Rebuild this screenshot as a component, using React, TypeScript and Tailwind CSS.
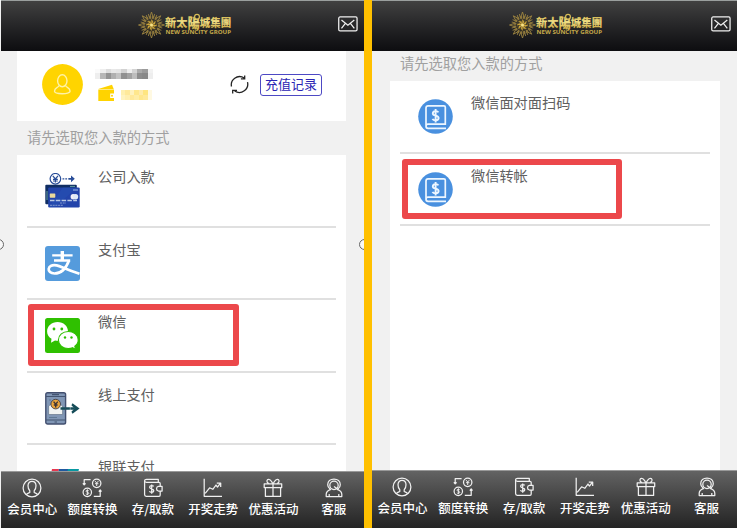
import React from "react";

const LogoMark = () => (
  <svg width="96" height="30" viewBox="0 0 96 30" className="block">
    <defs>
      <linearGradient id="gold" x1="0" y1="0" x2="0" y2="1">
        <stop offset="0" stopColor="#c8a63c" />
        <stop offset="0.5" stopColor="#f0df86" />
        <stop offset="1" stopColor="#c39b30" />
      </linearGradient>
    </defs>
    <g transform="translate(14.5 15)" stroke="#9d8440" fill="none">
      {Array.from({ length: 16 }, (_, i) => (
        <path key={i} d={i % 2 ? "M-1 -7.5L-1.2 -11.2M1 -7.5L1.2 -11.2" : "M-1.6 -8L0 -13L1.6 -8"} strokeWidth="0.9" transform={`rotate(${i * 22.5})`} />
      ))}
      <circle r="7.6" strokeWidth="2.6" stroke="#8e783c" strokeDasharray="2.2 0.8" />
      <circle r="5.2" strokeWidth="0.8" stroke="#5c4e25" />
      {Array.from({ length: 8 }, (_, i) => (
        <path key={i} d="M0 0L1.7 -3.2L0 -5.4Z" fill="#cda63a" stroke="#cda63a" strokeWidth="0.4" transform={`rotate(${i * 45})`} />
      ))}
      <circle r="1.5" fill="#f5e28a" stroke="none" />
    </g>
    <g fill="url(#gold)" fontFamily="'Noto Sans CJK TC', sans-serif" fontWeight="900">
      <text x="28" y="16.9" fontSize="11.3" textLength="22.4" lengthAdjust="spacingAndGlyphs">新太</text>
      <text x="50.4" y="17.8" fontSize="13.5" textLength="12.4" lengthAdjust="spacingAndGlyphs">陽</text>
      <text x="62.8" y="16.9" fontSize="11.3" textLength="31.4" lengthAdjust="spacingAndGlyphs">城集團</text>
    </g>
    <circle cx="60" cy="6.8" r="2.4" fill="#292929" stroke="#d8bd59" strokeWidth="1.2" />
    <text x="28.5" y="24.2" fontSize="5.4" fontWeight="700" fill="#c6aa4a" fontFamily="'Open Sans', sans-serif" textLength="65.5" lengthAdjust="spacingAndGlyphs">NEW SUNCITY GROUP</text>
  </svg>
);

const Header = () => (
  <header className="flex h-[51px] shrink-0 items-start border-t border-[#9a9f9e] bg-gradient-to-b from-[#414141] to-[#0d0d10]">
    <div className="ml-[136px] mt-[9px]"><LogoMark /></div>
    <svg className="ml-auto mr-[6px] mt-[15px]" width="20" height="16" viewBox="0 0 19 15" fill="none" stroke="#f0f0f0" strokeWidth="1.2">
      <rect x="0.7" y="0.8" width="17.4" height="13.2" rx="1.3" />
      <path d="M3.3 3.7L9.4 8.6L15.5 3.7M3.3 11.6L7 7M15.5 11.6L11.8 7" />
    </svg>
  </header>
);

const MemberIcon = () => (
  <>
    <circle cx="10" cy="10" r="8.9" />
    <path d="M4.3 16.6C5 15.4 6.5 15.1 7.8 14.5V12.7C6.6 11.5 6 9.8 6 7.8C6 5 7.6 3.3 10 3.3S14 5 14 7.8C14 9.8 13.4 11.5 12.2 12.7V14.5C13.5 15.1 15 15.4 15.7 16.6" />
  </>
);
const ExchangeIcon = () => (
  <>
    <circle cx="14.7" cy="5.3" r="4.2" />
    <circle cx="5.3" cy="14.3" r="4.2" />
    <path d="M13.1 3.1L14.7 5L16.3 3.1M14.7 5V8M13 5.7H16.4M6.7 12.8C6 11.9 4 12.1 4 13.2C4 14.5 6.8 14 6.8 15.3C6.8 16.5 4.7 16.7 3.8 15.8M5.4 11.4V17.2" strokeWidth="0.95" />
    <path d="M8.6 1.5H2.2V6.7M.8 5.4L2.2 6.9L3.6 5.4M11.8 18.3H18.2V12.2M16.8 13.6L18.2 12L19.5 13.6" />
  </>
);
const WalletIcon = () => (
  <>
    <path d="M17.2 8V5.5C17.2 4.7 16.8 4.3 16 4.3H3.5C2.4 4.3 1.6 3.7 1.6 2.8S2.4 1.4 3.5 1.4H15.3V4.2M1.6 2.8V16.6C1.6 17.8 2.2 18.3 3.2 18.3H16C16.8 18.3 17.2 17.8 17.2 17V13.3M19.1 8.4H15.4A2.35 2.35 0 0 0 15.4 13H19.1Z" />
    <path d="M10.7 8.4C9.7 7.1 6.6 7.4 6.6 9.2C6.6 11.2 10.8 10.6 10.8 12.8C10.8 14.6 7.5 14.8 6.3 13.4M8.7 6.4V15.8" />
  </>
);
const TrendIcon = () => (
  <path d="M1.2 .8V18.3H19M2.2 15.3L6.6 9.8L9.8 11.3L13 7L14.5 9L17.5 5.2M13.8 5.1H17.7V8.9" />
);
const GiftIcon = () => (
  <path d="M1.2 5.8H18.7V9.6H1.2ZM2.4 9.6V18.4H17.6V9.6M10 5.8V18.4M9.9 5.7C8 1.4 5.6 .6 4.4 1.8C3.3 3 4.3 5 6 5.7M10.1 5.7C12 1.4 14.4 .6 15.6 1.8C16.7 3 15.7 5 14 5.7" />
);
const ServiceIcon = () => (
  <path d="M6 10.9C4.5 9.8 3.7 8.6 3.7 6.8C3.7 3.2 6.4 1 10 1S16.3 3.2 16.3 6.8C16.3 8.6 15.5 9.8 14 10.9M10 3.1A4.2 4.2 0 1 0 10 11.5A4.2 4.2 0 1 0 10 3.1M10 8.4L13.6 11M7 11.4C3.6 12.4 2.2 14.1 2.2 16.3V18.5H17.8V16.3C17.8 14.1 16.4 12.4 13 11.4M5.2 18.3V16M14.8 18.3V16" />
);

const tabs = [
  { label: "会员中心", icon: <MemberIcon /> },
  { label: "额度转换", icon: <ExchangeIcon /> },
  { label: "存/取款", icon: <WalletIcon /> },
  { label: "开奖走势", icon: <TrendIcon /> },
  { label: "优惠活动", icon: <GiftIcon /> },
  { label: "客服", icon: <ServiceIcon /> },
];

const TabBar = ({ className }: { className: string }) => (
  <nav className={`grid shrink-0 grid-cols-6 border-t border-[#999] bg-gradient-to-b from-[#636363] to-[#242424] text-white ${className}`}>
    {tabs.map((t) => (
      <div key={t.label} className="flex flex-col items-center pt-[6px]">
        <svg width="20" height="20" viewBox="0 0 20 20" fill="none" stroke="#f0f0f0" strokeWidth="1.25" strokeLinejoin="round">{t.icon}</svg>
        <span className="mt-[2px] whitespace-nowrap text-[12.5px] font-medium leading-[18px]">{t.label}</span>
      </div>
    ))}
  </nav>
);

const BankCards = () => (
  <svg width="35" height="35" viewBox="0 0 35 35">
    <g fill="none" stroke="#294d98" strokeWidth="1.2">
      <circle cx="10.4" cy="5.8" r="5.3" />
      <path d="M7.8 2.9L10.4 6L13 2.9M10.4 6V9.5M8 6.4H12.8M8 8H12.8" />
      <path d="M17.5 5.8H24" strokeDasharray="1.8 1" />
    </g>
    <path d="M24 4.9H26V2.4L29.8 5.8L26 9.2V6.7H24Z" fill="#294d98" />
    <rect x="0.3" y="11.8" width="31.5" height="19.4" rx="1" fill="#102e63" />
    <path d="M25 13.4H30M2 18V27" stroke="#66a0a3" />
    <rect x="3.2" y="14.4" width="31.5" height="20" rx="1.2" fill="#2344aa" />
    <path d="M4 34L18 14.5H32L10 34Z" fill="#2959bb" opacity=".35" />
    <rect x="4.8" y="20.5" width="5.5" height="4.2" rx=".6" fill="#ead99b" />
    <path d="M28 17H33" stroke="#8ca9dd" strokeWidth="1.2" />
    <ellipse cx="28.2" cy="23.8" rx="2.6" ry="2.7" fill="#f2f0f7" />
    <ellipse cx="30.6" cy="23.8" rx="2.6" ry="2.7" fill="#e1ebf7" />
    <path d="M5 27.5H32" stroke="#b9c8e4" strokeWidth="1.5" strokeDasharray="4.5 1.3" />
    <path d="M15 30H21M5 32.3H18" stroke="#8098cd" strokeDasharray="2 .7" />
  </svg>
);
const Alipay = () => (
  <svg width="35" height="35" viewBox="0 0 35 35">
    <rect width="35" height="35" rx="3" fill="#559bdc" />
    <g fill="none" stroke="white">
      <path d="M7.2 9.3H27.6M9 14.5H25.2" strokeWidth="2.3" />
      <path d="M17.3 5V14.5" strokeWidth="3.4" />
      <path d="M24 14.5C21.5 21.2 16.8 27.5 9.5 27.5C5.5 27.5 3.4 25.2 3.7 22.8C4.1 20 7.2 18.4 11.6 19.4C16 20.4 20.8 23.5 34.5 27.8" strokeWidth="2.7" />
    </g>
  </svg>
);
const WeChat = () => (
  <svg width="35" height="35" viewBox="0 0 35 35">
    <rect width="35" height="35" rx="2.5" fill="#2fc000" />
    <path d="M12.6 4.1C6.8 4.1 2.1 8.3 2.1 13.4C2.1 16.5 3.8 19 6.5 20.8L6 24.8L10 22.4C18 24 23 19 23 13.4C23 8.3 18.4 4.1 12.6 4.1Z" fill="white" />
    <path d="M23.3 13.5C17.8 13.5 13.4 17.2 13.4 22S17.8 30.5 23.3 30.5C24.9 30.5 26.3 30.2 27.5 29.7L30.6 31.5L29.8 28.3C32 26.7 33.2 24.6 33.2 22C33.2 17.2 28.8 13.5 23.3 13.5Z" fill="white" stroke="#2fc000" strokeWidth="1.1" />
    <g fill="#2fc000"><circle cx="9" cy="11" r="1.4" /><circle cx="16.8" cy="11" r="1.4" /><circle cx="20" cy="19.5" r="1.2" /><circle cx="26.5" cy="19.5" r="1.2" /></g>
  </svg>
);
const PhonePay = () => (
  <svg width="35" height="35" viewBox="0 0 35 35">
    <rect x=".8" y="1.8" width="19.8" height="31.2" rx="1.8" fill="#8096b5" stroke="#424f6f" strokeWidth="1.4" />
    <path d="M1 5.5H20.4M1 29H20.4" stroke="#435471" strokeWidth="1.1" />
    <path d="M7 3.6H14M9.5 31H12" stroke="#435471" strokeWidth="1.2" />
    <path d="M3.6 15L7 12.5H14L17.6 15V23.5H3.6Z" fill="#f0f3f2" stroke="#65758b" strokeWidth=".7" />
    <circle cx="10.7" cy="13.1" r="4.8" fill="#eaa53c" stroke="#3e3d49" strokeWidth=".9" />
    <path d="M8.6 10.6L10.7 13.2L12.8 10.6M10.7 13V16.5M8.8 14H12.6" fill="none" stroke="#3f3435" strokeWidth="1.4" />
    <path d="M4 26.5H12M4 9H6" stroke="#5f7995" />
    <path d="M15.5 17.5H30" fill="none" stroke="#164d59" strokeWidth="2.6" strokeDasharray="4.5 .4" />
    <path d="M27.5 12.2L34.6 17.5L27.5 22.8L26.4 20.8L29.5 17.5L26.4 14.2Z" fill="#164d59" />
  </svg>
);
const UnionPay = () => (
  <svg width="35" height="35" viewBox="0 0 35 35">
    <path d="M7 6H14L10 29H2Z" fill="#e63850" /><path d="M14 6H24L19 29H9Z" fill="#2059a0" /><path d="M23 6H34L28 29H18Z" fill="#0899a2" />
  </svg>
);
const Ledger = () => (
  <svg width="35" height="35" viewBox="0 0 35 35">
    <circle cx="17.5" cy="17.5" r="17.3" fill="#4990df" />
    <g fill="none" stroke="#edf6ff" strokeWidth="1.7">
      <path d="M8 26.5V9Q8 6.8 10.1 6.8H25.9Q27.3 6.8 27.3 8.3V25.2H10Q8 25.2 8 27.3Q8 29.3 10 29.3H28" />
      <path d="M20.4 13.4C19.4 11.5 14.8 11.7 14.8 14.4C14.8 17.4 20.6 15.8 20.6 19C20.6 21.8 15.6 22 14.5 19.8M17.6 10V23.4" strokeWidth="1.9" />
    </g>
  </svg>
);

const Row = ({ label, icon }: { label: string; icon: React.ReactNode }) => (
  <li className="flex h-[72.5px] shrink-0 items-start border-b-2 border-[#e0e0e0] pl-[18px]">
    <span className="mt-[18px] size-[35px] shrink-0">{icon}</span>
    <span className="ml-[18px] mt-[11px] text-[14.2px] leading-[20px] text-[#606060]">{label}</span>
  </li>
);

const nameTones = ["bg-[#eeeeee]", "bg-[#b7b7b7]", "bg-[#949494]", "bg-[#b0b0b0]", "bg-[#c3c3c3]", "bg-[#919191]", "bg-[#a2a2a2]", "bg-[#bdbdbd]", "bg-[#8d8d8d]", "bg-[#888888]", "bg-[#eeeeee]"];
const lightTones = ["bg-[#fafafa]", "bg-[#eeeeee]", "bg-[#dddddd]", "bg-[#e8e8e8]", "bg-[#e5e5e5]", "bg-[#d2d2d2]", "bg-[#eeeeee]", "bg-[#d3d3d3]", "bg-[#aaaaaa]", "bg-[#9b9b9b]", "bg-[#f2f2f2]"];
const goldTones = ["bg-[#fff0af]", "bg-[#ffe99a]", "bg-[#fff2bd]", "bg-[#ffe78c]", "bg-[#ffebaa]", "bg-[#ffe580]", "bg-[#fff9e2]"];
const goldLowTones = ["bg-[#fff3c0]", "bg-[#ffefb0]", "bg-[#ffe99a]", "bg-[#ffeda6]", "bg-[#ffe78c]", "bg-[#ffe99a]", "bg-[#fff9e2]"];
const Strip = ({ tones, className }: { tones: string[]; className: string }) => (
  <div className={`flex ${className}`}>{tones.map((t, i) => <span key={i} className={`flex-1 ${t}`} />)}</div>
);

const Account = () => (
  <section className="mx-[17px] flex h-[70px] w-[329px] shrink-0 items-start bg-white">
    <svg className="ml-[25px] mt-[13px]" width="41" height="41" viewBox="0 0 41 41">
      <circle cx="20.5" cy="20.5" r="20.4" fill="#ffd400" />
      <g fill="none" stroke="#fff2a7" strokeWidth="1.4">
        <ellipse cx="20.3" cy="16.8" rx="4.7" ry="6" />
        <path d="M17 21.5C16.7 23.8 12.5 23.2 12.5 27.3C12.5 30.5 28.1 30.5 28.1 27.3C28.1 23.2 23.9 23.8 23.6 21.5" />
      </g>
    </svg>
    <div className="ml-[12px] mt-[18px] w-[58px]">
      <Strip tones={lightTones} className="h-[4px]" />
      <Strip tones={nameTones} className="h-[6px]" />
      <div className="mt-[5px] flex items-start">
        <svg className="ml-[3px]" width="17" height="18" viewBox="0 0 17 18">
          <path d="M.3 5L14 .8L15.7 5Z" fill="#ffd300" /><path d="M.3 5.4H16V9.5H12.2V14H16V17H.3Z" fill="#ffd300" /><circle cx="14" cy="11.8" r="1" fill="#ffd300" />
        </svg>
        <div className="ml-[6px] mt-[6px] w-[31px]"><Strip tones={goldTones} className="h-[5px]" /><Strip tones={goldLowTones} className="h-[5px]" /></div>
      </div>
    </div>
    <svg className="ml-[77px] mt-[24px]" width="19" height="19" viewBox="0 0 19 19" fill="none" stroke="#242424" strokeWidth="1.3">
      <path d="M1.5 11.5C.1 4.8 7.2-1.2 14.4 3M17.5 7.1C19.2 14 11.5 20.4 4.6 16M14.7 .4V3.8H10.9M2.7 18.4V15.3H7" />
    </svg>
    <button className="ml-[11px] mt-[23px] flex h-[22px] w-[62px] items-start justify-center rounded-[3px] border-[1.5px] border-[#4d49c4] text-[13px] leading-[18px] text-[#2b25b4]">充值记录</button>
  </section>
);

const Prompt = ({ className }: { className: string }) => (
  <h2 className={`shrink-0 whitespace-nowrap text-[14.25px] text-[#a0a0a0] ${className}`}>请先选取您入款的方式</h2>
);

const EdgeHandle = ({ className }: { className: string }) => (
  <span className={`absolute size-[11px] rounded-full border border-[#666] bg-[#f8f8f8] ${className}`} />
);

export default function App() {
  return (
    <main className="relative flex h-[528px] w-[737px] overflow-hidden bg-[#f1f1f1] font-['Noto_Sans_CJK_SC',sans-serif]">
      <section className="relative flex w-[364px] shrink-0 flex-col overflow-hidden pl-px">
        <Header />
        <div className="-ml-px flex min-h-0 flex-1 flex-col overflow-hidden">
          <Account />
          <Prompt className="ml-[27px] h-[34px] leading-[31px]" />
          <ul className="ml-[17px] min-h-0 w-[329px] flex-1 overflow-hidden bg-white px-[10px]">
            <Row label="公司入款" icon={<BankCards />} />
            <Row label="支付宝" icon={<Alipay />} />
            <Row label="微信" icon={<WeChat />} />
            <Row label="线上支付" icon={<PhonePay />} />
            <Row label="银联支付" icon={<UnionPay />} />
          </ul>
        </div>
        <TabBar className="h-[57px] pl-px" />
        <EdgeHandle className="left-[-7px] top-[239px]" />
        <EdgeHandle className="left-[359px] top-[239px]" />
      </section>
      <div className="w-[8px] shrink-0 bg-[#ffc000]" />
      <section className="flex min-w-0 flex-1 flex-col">
        <Header />
        <Prompt className="ml-[28px] h-[30px] leading-[23px]" />
        <ul className="ml-[18px] min-h-0 w-[330px] flex-1 bg-white px-[10px]">
          <Row label="微信面对面扫码" icon={<Ledger />} />
          <Row label="微信转帐" icon={<Ledger />} />
        </ul>
        <TabBar className="h-[58px]" />
      </section>
      <div className="absolute left-[28px] top-[304px] h-[62px] w-[211px] rounded-[3px] border-[6px] border-[#ec484b]" />
      <div className="absolute left-[402px] top-[159px] h-[60px] w-[220px] rounded-[3px] border-[6px] border-[#ec484b]" />
    </main>
  );
}
